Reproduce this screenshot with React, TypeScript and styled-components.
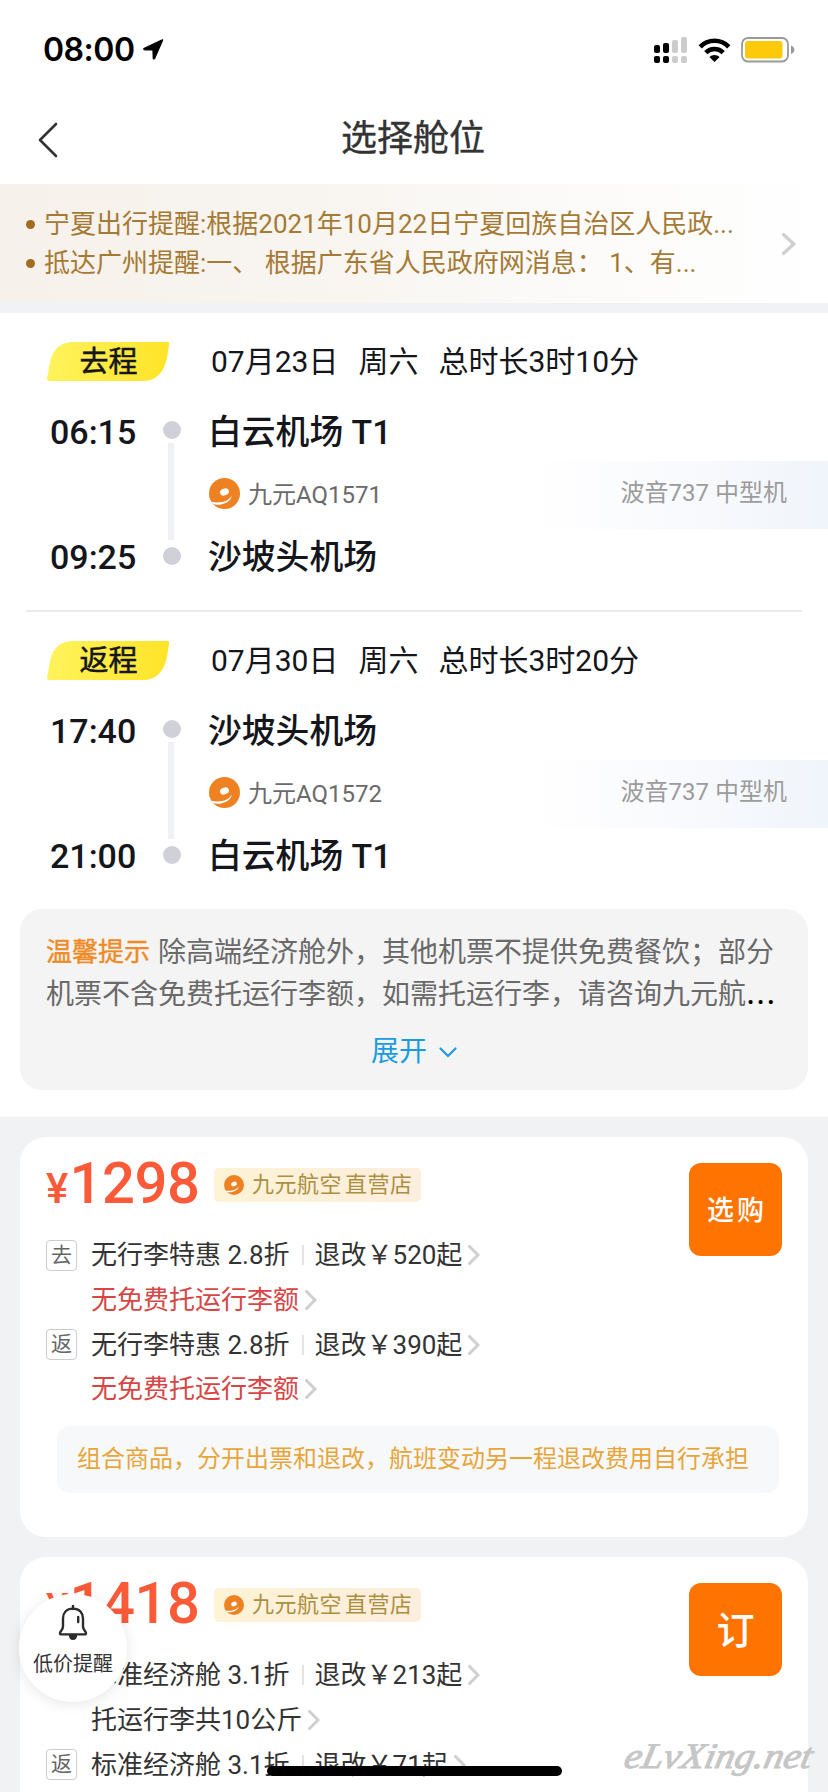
import React from 'react';
import styled, { createGlobalStyle } from 'styled-components';

const GlobalStyle = createGlobalStyle`
  *, *::before, *::after { box-sizing: border-box; }
  html, body { margin: 0; padding: 0; background: #fff; }
  body {
    font-family: Roboto, "Noto Sans CJK SC", sans-serif;
    -webkit-font-smoothing: antialiased;
    overflow: hidden;
  }
`;

const Screen = styled.div`
  position: relative;
  width: 828px;
  height: 1792px;
  overflow: hidden;
  background: #fff;
  display: flex;
  flex-direction: column;
`;

/* ---------- status bar & navigation ---------- */

const StatusBar = styled.div`
  flex: none;
  height: 94px;
  padding: 6px 33px 0 43px;
  display: flex;
  align-items: center;
  justify-content: space-between;
`;

const StatusTime = styled.div`
  display: flex;
  align-items: center;
  gap: 7px;
  font: 600 32px/40px Inter, sans-serif;
  letter-spacing: -0.5px;
  color: #000;
`;

const StatusIcons = styled.div`
  display: flex;
  align-items: center;
  gap: 10px;
`;

const NavBar = styled.div`
  flex: none;
  height: 90px;
  padding: 2px 38px 0;
  display: grid;
  grid-template-columns: 22px 1fr 22px;
  align-items: center;
`;

const NavTitle = styled.h1`
  margin: 0 2px 2px 0;
  text-align: center;
  font-size: 36px;
  line-height: 50px;
  font-weight: 400;
  color: #333;
  -webkit-text-stroke: 0.4px #333;
`;

/* ---------- notice ---------- */

const Notice = styled.div`
  flex: none;
  height: 119px;
  padding: 0 32px 0 26px;
  display: flex;
  align-items: center;
  justify-content: space-between;
  background: linear-gradient(90deg, #f6f1eb 0%, #f8f4ef 35%, #fbfaf8 65%, #ffffff 100%);
`;

const NoticeList = styled.ul`
  margin: 0;
  padding: 1px 0 0;
  list-style: none;
`;

const NoticeItem = styled.li`
  display: flex;
  align-items: center;
  height: 39.5px;
  font-size: 26px;
  line-height: 39px;
  white-space: pre;
  color: #a57a35;

  &::before {
    content: "";
    width: 9px;
    height: 9px;
    margin-right: 9px;
    border-radius: 50%;
    background: #a06c22;
  }
`;

const Band = styled.div`
  flex: none;
  height: 10px;
  background: #f1f2f4;
`;

/* ---------- flight legs ---------- */

const LegBox = styled.section`
  flex: none;
  height: 297px;
  padding-top: 29px;
`;

const LegHeader = styled.div`
  height: 39px;
  padding-left: 47px;
  display: flex;
  align-items: center;
`;

const LegBadge = styled.span`
  width: 122px;
  height: 39px;
  margin-right: 42px;
  padding: 2px 0 0 1px;
  text-align: center;
  background: linear-gradient(100deg, #fff35e 0%, #ffe326 100%);
  clip-path: path("M27 0 H121 Q123 0 122 3 L120 16 Q115 39 96 39 H2 Q0 39 0 37 L3 20 Q7 0 27 0 Z");
  font-size: 29px;
  line-height: 37px;
  color: #14161b;
  -webkit-text-stroke: 0.5px #14161b;
`;

const LegMeta = styled.div`
  display: flex;
  gap: 20px;
  font-size: 30px;
  line-height: 40px;
  color: #14161b;
  white-space: nowrap;
`;

const LegBody = styled.div`
  height: 173px;
  margin-top: 27px;
  display: grid;
  grid-template-columns: 163px 18px 1fr;
`;

const Times = styled.div`
  padding-left: 50px;
  display: flex;
  flex-direction: column;
  justify-content: space-between;
`;

const Time = styled.div`
  font-size: 34px;
  font-weight: 500;
  line-height: 48px;
  color: #14161b;
`;

const Track = styled.div`
  padding: 13px 0 16px;
  display: flex;
  flex-direction: column;
  align-items: center;
`;

const Dot = styled.i`
  flex: none;
  width: 18px;
  height: 18px;
  border-radius: 50%;
  background: #d0d1d8;
`;

const Rail = styled.i`
  flex: 1;
  width: 6px;
  margin: 4px 2px 7px 0;
  background: #f0f1f4;
`;

const Route = styled.div`
  padding-left: 27px;
  display: flex;
  flex-direction: column;
`;

const Airport = styled.div`
  height: 48px;
  padding-top: 1px;
  font-size: 33.8px;
  font-weight: 500;
  line-height: 48px;
  color: #14161b;
  white-space: pre;
`;

const FlightRow = styled.div`
  height: 68px;
  margin: 5px 0 4px;
  display: flex;
  justify-content: space-between;
`;

const FlightNo = styled.div`
  display: flex;
  align-items: center;
  gap: 8px;
  height: 65px;
  padding-left: 1px;
  font-size: 24px;
  color: #6a6a6a;
`;

const FlightText = styled.span`
  padding-bottom: 3px;
`;

const Aircraft = styled.div`
  width: 300px;
  padding: 0 41px 3px 0;
  text-align: right;
  font-size: 24px;
  line-height: 65px;
  color: #9c9c9c;
  background: linear-gradient(90deg, rgba(241, 245, 252, 0) 0%, #f9fafd 50%, #f0f5fb 100%);
`;

const Divider = styled.hr`
  flex: none;
  width: 776px;
  height: 2px;
  margin: 0 26px;
  border: 0;
  background: #ebebec;
`;

/* ---------- tip card ---------- */

const TipCard = styled.section`
  flex: none;
  width: 788px;
  height: 181px;
  margin: 0 20px 27px;
  padding: 23px 26px 0;
  border-radius: 22px;
  background: #f4f4f4;
`;

const TipLine = styled.div`
  display: flex;
  align-items: center;
  height: 41.5px;
  font-size: 28px;
  line-height: 41px;
  color: #6a6a6a;
  white-space: nowrap;
`;

const TipLabel = styled.b`
  margin-right: 8px;
  font-size: 26px;
  font-weight: 400;
  color: #f08a24;
  -webkit-text-stroke: 0.4px #f08a24;
`;

const TipDots = styled.span`
  padding-bottom: 4px;
  font-size: 36px;
  font-weight: 400;
  line-height: 36px;
  letter-spacing: 0.6px;
  color: #000;
`;

const Expand = styled.div`
  margin-top: 16px;
  display: flex;
  align-items: center;
  justify-content: center;
  gap: 12px;
  font-size: 28px;
  line-height: 42px;
  color: #1a9be0;
`;

/* ---------- fare list ---------- */

const FareList = styled.main`
  flex: 1;
  padding: 20px 20px 0;
  display: flex;
  flex-direction: column;
  gap: 20px;
  background: #f0f2f4;
`;

const FareCard = styled.article`
  flex: none;
  height: 400px;
  padding: 26px 26px 0;
  border-radius: 26px;
  background: #fff;
`;

const FareTop = styled.div`
  display: flex;
  align-items: flex-start;
  justify-content: space-between;
  height: 70px;
`;

const PriceRow = styled.div`
  display: flex;
  align-items: center;
  height: 46px;
`;

const Price = styled.div`
  width: 168px;
  font-size: 58px;
  font-weight: 500;
  line-height: 44px;
  letter-spacing: -0.4px;
  color: #fa5a38;
  white-space: nowrap;

  small {
    font-size: 42px;
    margin-right: 1.5px;
  }
`;

const ShopTag = styled.div`
  width: 207px;
  height: 34px;
  margin-bottom: 2px;
  padding: 0 0 0 10px;
  display: flex;
  align-items: center;
  border-radius: 5px;
  background: linear-gradient(90deg, #fdf3d5, #fdeedd);
  font-size: 22px;
  letter-spacing: 0.5px;
  line-height: 34px;
  color: #ab8f42;

  svg { margin-right: 8px; }
  span + span { margin-left: 3px; }
`;

const BuyButton = styled.button<{ $large?: boolean }>`
  flex: none;
  width: 93px;
  height: 93px;
  padding: 0 0 ${(p) => (p.$large ? 5 : 2)}px;
  border: 0;
  border-radius: 12px;
  background: #ff7300;
  color: #fff;
  font-family: inherit;
  font-weight: 500;
  font-size: ${(p) => (p.$large ? 38 : 27)}px;
  letter-spacing: ${(p) => (p.$large ? 0 : 3)}px;
  text-indent: ${(p) => (p.$large ? 0 : 3)}px;
`;

const FareLine = styled.div<{ $warn?: boolean }>`
  height: 44.7px;
  display: flex;
  align-items: center;
  font-size: 26px;
  line-height: 44px;
  white-space: pre;
  color: ${(p) => (p.$warn ? '#d84545' : '#333')};
`;

const BoxSlot = styled.span`
  flex: none;
  width: 45px;
`;

const DirBox = styled.span`
  width: 31px;
  height: 31px;
  display: grid;
  place-items: center;
  border: 1px solid #ccc;
  border-radius: 4px;
  font-size: 21px;
  line-height: 27px;
  color: #666;
`;

const Pipe = styled.i`
  width: 2px;
  height: 20px;
  margin: 0 11px 0 12px;
  background: #e3e3e3;
`;

const ComboNote = styled.div`
  width: 722px;
  height: 67px;
  margin: 14px 0 0 11px;
  padding-left: 20px;
  border-radius: 13px;
  background: #f7f8fa;
  font-size: 24px;
  line-height: 66px;
  color: #e8a53a;
  white-space: nowrap;
`;

/* ---------- overlays ---------- */

const AlertFab = styled.div`
  position: absolute;
  left: 19px;
  top: 1594px;
  width: 108px;
  height: 108px;
  padding-top: 11px;
  border-radius: 50%;
  background: #fff;
  box-shadow: 0 2px 14px rgba(0, 0, 0, 0.1);
  display: flex;
  flex-direction: column;
  align-items: center;
  font-size: 20px;
  line-height: 28px;
  color: #333;

  svg { margin-bottom: 9px; }
`;

const Watermark = styled.div`
  position: absolute;
  left: 622px;
  top: 1734px;
`;

const HomeIndicator = styled.div`
  position: absolute;
  left: 267px;
  top: 1766px;
  width: 295px;
  height: 10px;
  border-radius: 5px;
  background: #000;
`;

const Chevron = ({ w = 12, h = 20, sw = 3, ml = 6 }: { w?: number; h?: number; sw?: number; ml?: number }) => (
  <svg width={w} height={h} viewBox={`0 0 ${w} ${h}`} style={{ marginLeft: ml }} fill="none">
    <path
      d={`M${sw / 2} ${sw / 2} L${w - sw / 2 - 0.5} ${h / 2} L${sw / 2} ${h - sw / 2}`}
      stroke="#cfcfcf"
      strokeWidth={sw}
      strokeLinecap="round"
    />
  </svg>
);

const AirlineLogo = ({ size }: { size: number }) => (
  <svg width={size} height={size} viewBox="0 0 32 32">
    <circle cx="16" cy="16" r="16" fill="#ee8122" />
    <ellipse cx="16" cy="14.4" rx="4.7" ry="3.5" transform="rotate(-22 16 14.4)" fill="#fff" />
    <path d="M2.4 24.6 C12 26.4 20.6 24 23.4 18 C23 24.6 13.5 29 4.6 27.2 Z" fill="#fff" />
  </svg>
);

type LegData = {
  label: string;
  date: string;
  duration: string;
  from: [string, string];
  to: [string, string];
  flight: string;
};

const legs: LegData[] = [
  {
    label: '去程',
    date: '07月23日',
    duration: '总时长3时10分',
    from: ['06:15', '白云机场 T1'],
    to: ['09:25', '沙坡头机场'],
    flight: '九元AQ1571',
  },
  {
    label: '返程',
    date: '07月30日',
    duration: '总时长3时20分',
    from: ['17:40', '沙坡头机场'],
    to: ['21:00', '白云机场 T1'],
    flight: '九元AQ1572',
  },
];

const Leg = ({ leg }: { leg: LegData }) => (
  <LegBox>
    <LegHeader>
      <LegBadge>{leg.label}</LegBadge>
      <LegMeta>
        <span>{leg.date}</span>
        <span>周六</span>
        <span>{leg.duration}</span>
      </LegMeta>
    </LegHeader>
    <LegBody>
      <Times>
        <Time>{leg.from[0]}</Time>
        <Time>{leg.to[0]}</Time>
      </Times>
      <Track>
        <Dot />
        <Rail />
        <Dot />
      </Track>
      <Route>
        <Airport>{leg.from[1]}</Airport>
        <FlightRow>
          <FlightNo>
            <AirlineLogo size={31} />
            <FlightText>{leg.flight}</FlightText>
          </FlightNo>
          <Aircraft>波音737 中型机</Aircraft>
        </FlightRow>
        <Airport>{leg.to[1]}</Airport>
      </Route>
    </LegBody>
  </LegBox>
);

type Segment = { dir: string; cabin: string; change: string; baggage?: string };

type Fare = {
  price: string;
  action: string;
  large?: boolean;
  segments: Segment[];
  warn?: boolean;
  note?: string;
};

const fares: Fare[] = [
  {
    price: '1298',
    action: '选购',
    segments: [
      { dir: '去', cabin: '无行李特惠 2.8折', change: '退改￥520起', baggage: '无免费托运行李额' },
      { dir: '返', cabin: '无行李特惠 2.8折', change: '退改￥390起', baggage: '无免费托运行李额' },
    ],
    warn: true,
    note: '组合商品，分开出票和退改，航班变动另一程退改费用自行承担',
  },
  {
    price: '1418',
    action: '订',
    large: true,
    segments: [
      { dir: '去', cabin: '标准经济舱 3.1折', change: '退改￥213起', baggage: '托运行李共10公斤' },
      { dir: '返', cabin: '标准经济舱 3.1折', change: '退改￥71起' },
    ],
  },
];

const FareItem = ({ fare }: { fare: Fare }) => (
  <FareCard>
    <FareTop>
      <PriceRow>
        <Price>
          <small>¥</small>
          {fare.price}
        </Price>
        <ShopTag>
          <AirlineLogo size={20} />
          <span>九元航空</span>
          <span>直营店</span>
        </ShopTag>
      </PriceRow>
      <BuyButton $large={fare.large}>{fare.action}</BuyButton>
    </FareTop>
    {fare.segments.map((seg) => (
      <React.Fragment key={seg.dir}>
        <FareLine>
          <BoxSlot>
            <DirBox>{seg.dir}</DirBox>
          </BoxSlot>
          {seg.cabin}
          <Pipe />
          {seg.change}
          <Chevron />
        </FareLine>
        {seg.baggage && (
          <FareLine $warn={fare.warn}>
            <BoxSlot />
            {seg.baggage}
            <Chevron />
          </FareLine>
        )}
      </React.Fragment>
    ))}
    {fare.note && <ComboNote>{fare.note}</ComboNote>}
  </FareCard>
);

export default function App() {
  return (
    <>
      <GlobalStyle />
      <Screen>
        <StatusBar>
          <StatusTime>
            08:00
            <svg width="22" height="22" viewBox="0 0 22 22">
              <path
                d="M20.6 1.2 L12.6 19.4 Q11.6 20.8 11.2 19 L11 11 L3 10.8 Q0.6 10.2 2.4 9.2 L19.8 1 Q21 0.4 20.6 1.2 Z"
                stroke="#000"
                strokeWidth="1.2"
                strokeLinejoin="round"
              />
            </svg>
          </StatusTime>
          <StatusIcons>
            <svg width="34" height="26" viewBox="0 0 34 26">
              {[
                { x: 0, y: 8, h: 8, fill: '#000' },
                { x: 9, y: 6, h: 10, fill: '#000' },
                { x: 18, y: 3, h: 13, fill: '#ccc' },
                { x: 27, y: 0, h: 16, fill: '#ccc' },
              ].map(({ x, y, h, fill }) => (
                <g key={x} fill={fill}>
                  <rect x={x} y={y} width="6" height={h} rx="2" />
                  <rect x={x} y="19" width="6" height="7" rx="2" />
                </g>
              ))}
            </svg>
            <svg width="33" height="25" viewBox="0 0 33 25" fill="none" stroke="#000" strokeWidth="4.6">
              <path d="M2.2 8.8 C10 0.8 23 0.8 30.8 8.8" />
              <path d="M7.8 14.6 C12.6 9.8 20.4 9.8 25.2 14.6" />
              <path d="M16.5 24 L11.4 19 C14.3 16.3 18.7 16.3 21.6 19 Z" fill="#000" stroke="none" />
            </svg>
            <svg width="54" height="26" viewBox="0 0 54 26">
              <rect x="1" y="1" width="46" height="23.5" rx="6" fill="none" stroke="#999" strokeWidth="1.8" />
              <rect x="4" y="4" width="37.5" height="17.5" rx="3" fill="#fdc90b" />
              <path d="M50 8.5 Q53.4 10 53.4 12.8 Q53.4 15.6 50 17 Z" fill="#999" />
            </svg>
          </StatusIcons>
        </StatusBar>

        <NavBar>
          <svg width="20" height="36" viewBox="0 0 20 36" fill="none">
            <path d="M18 2 L2 18 L18 34" stroke="#333" strokeWidth="2.6" strokeLinecap="round" strokeLinejoin="round" />
          </svg>
          <NavTitle>选择舱位</NavTitle>
        </NavBar>

        <Notice>
          <NoticeList>
            <NoticeItem>宁夏出行提醒:根据2021年10月22日宁夏回族自治区人民政...</NoticeItem>
            <NoticeItem>抵达广州提醒:一、 根据广东省人民政府网消息： 1、有...</NoticeItem>
          </NoticeList>
          <Chevron w={14} h={22} sw={3.4} ml={0} />
        </Notice>
        <Band />

        <Leg leg={legs[0]} />
        <Divider />
        <Leg leg={legs[1]} />

        <TipCard>
          <TipLine>
            <TipLabel>温馨提示</TipLabel>
            除高端经济舱外，其他机票不提供免费餐饮；部分
          </TipLine>
          <TipLine>
            机票不含免费托运行李额，如需托运行李，请咨询九元航<TipDots>...</TipDots>
          </TipLine>
          <Expand>
            展开
            <svg width="18" height="11" viewBox="0 0 18 11" fill="none">
              <path d="M1.5 1.5 L9 9 L16.5 1.5" stroke="#1a9be0" strokeWidth="2.2" strokeLinecap="round" />
            </svg>
          </Expand>
        </TipCard>

        <FareList>
          {fares.map((fare) => (
            <FareItem key={fare.price} fare={fare} />
          ))}
        </FareList>

        <AlertFab>
          <svg width="30" height="36" viewBox="0 0 30 36" fill="none">
            <path
              d="M15 3.6 C8.4 3.6 5 8 5 13.5 V21.5 C5 25 2 26.4 2 28 Q2 29.4 3.6 29.4 H26.4 Q28 29.4 28 28 C28 26.4 25 25 25 21.5 V13.5 C25 8 21.6 3.6 15 3.6 Z"
              stroke="#2b2b2b"
              strokeWidth="2.4"
            />
            <path d="M15 0.8 V4 M20.2 12 V17" stroke="#2b2b2b" strokeWidth="2.4" strokeLinecap="round" />
            <path d="M10.8 30 H19.2 Q19 35 15 35 Q11 35 10.8 30 Z" fill="#2b2b2b" />
          </svg>
          低价提醒
        </AlertFab>

        <Watermark>
          <svg width="206" height="54" viewBox="0 0 206 54">
            <text
              x="0"
              y="34"
              textLength="187"
              lengthAdjust="spacingAndGlyphs"
              transform="skewX(-12) translate(8 0)"
              fontFamily="'Liberation Serif', serif"
              fontStyle="italic"
              fontSize="36"
              fill="#c6c6c6"
              stroke="#c6c6c6"
              strokeWidth="1"
            >
              eLvXing.net
            </text>
          </svg>
        </Watermark>
        <HomeIndicator />
      </Screen>
    </>
  );
}
